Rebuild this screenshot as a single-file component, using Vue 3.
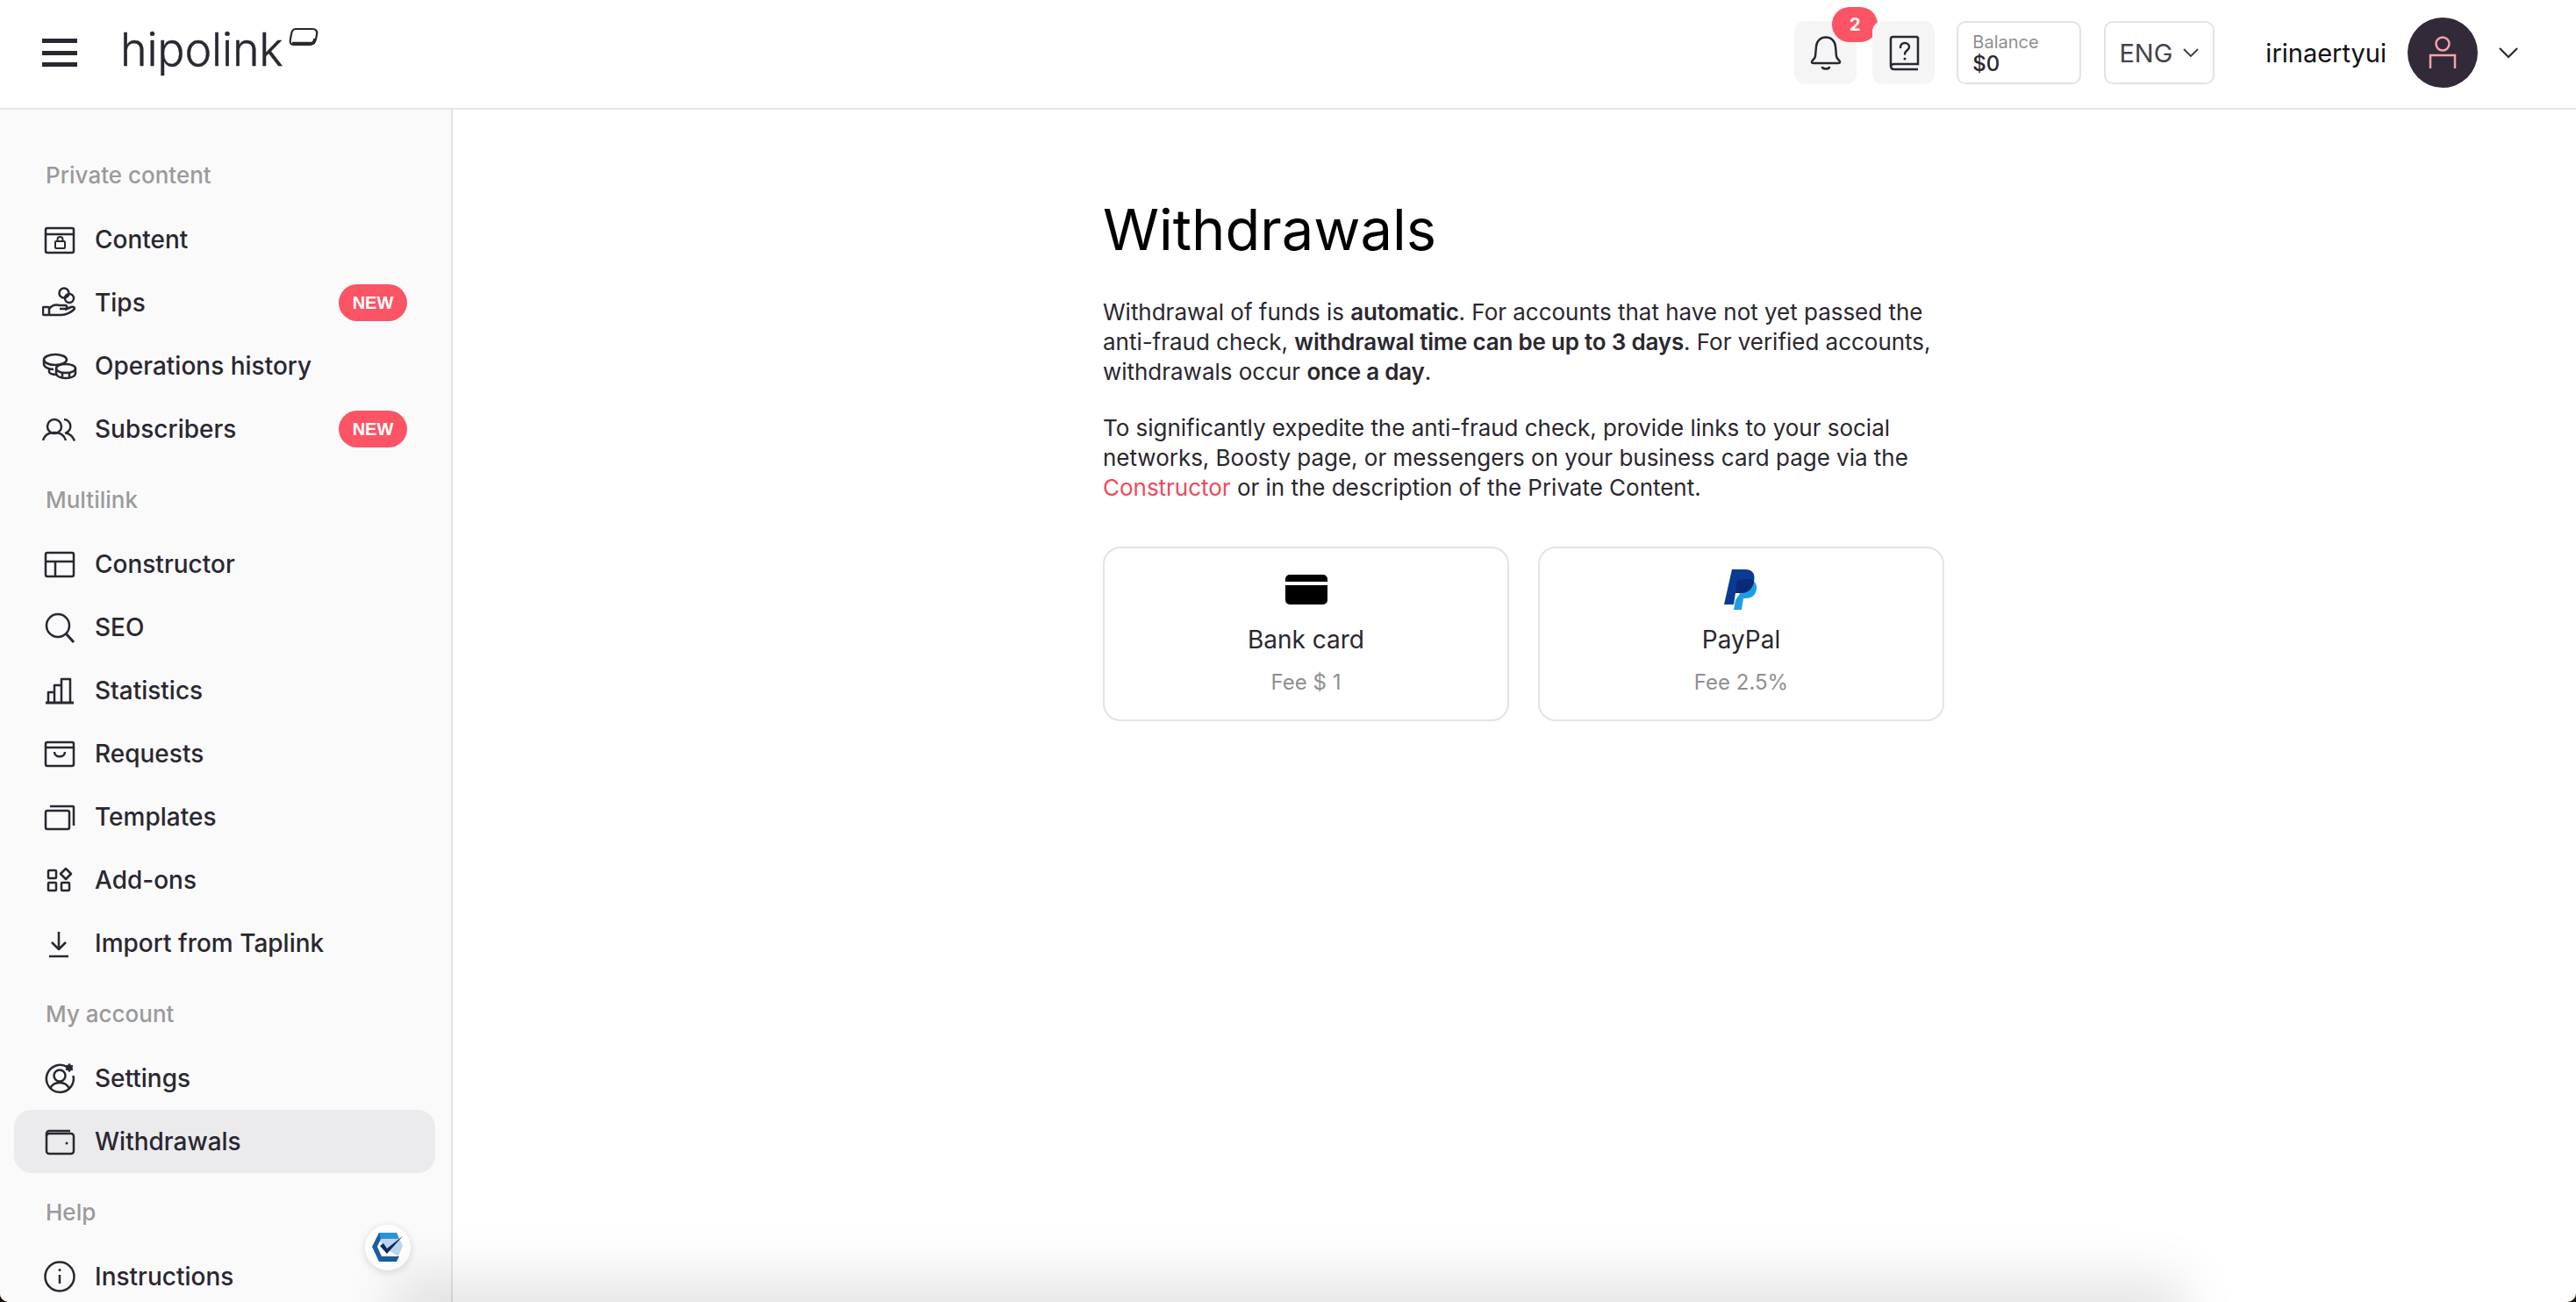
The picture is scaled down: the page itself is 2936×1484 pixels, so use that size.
<script setup>
const sections = [
  {
    title: 'Private content',
    items: [
      { name: 'Content', icon: '<rect x="4" y="7" width="32" height="28" rx="2"/><path d="M4 14H36"/><rect x="15" y="22" width="11" height="8" rx="1" stroke-width="2"/><path d="M17.500 22v-2a3 3 0 0 1 6 0v2" stroke-width="2"/>' },
      { name: 'Tips', badge: 'NEW', icon: '<circle cx="25" cy="9" r="5.500"/><circle cx="31" cy="15" r="5"/><rect x="1" y="25" width="7" height="9" rx="1"/><path d="M8 27c3-4 8-5 12-4h6c3 0 3 4 0 4h-6"/><path d="M8 34h14c5 0 11-3 14-6 2-2 0-4-3-3l-7 3"/>' },
      { name: 'Operations history', icon: '<ellipse cx="15" cy="13" rx="13" ry="6"/><path d="M2 13v5c0 3 5 6 11 6"/><ellipse cx="27" cy="23" rx="11" ry="5"/><path d="M16 23v5c0 4 5 6 11 6s11-2 11-6v-5M23 28v6M31 28v6M8 24v3c0 1 3 3 8 3"/>' },
      { name: 'Subscribers', badge: 'NEW', icon: '<circle cx="14" cy="17" r="8"/><path d="M1 33c2-7 7-9 13-9s11 2 13 9"/><path d="M25 9a8 8 0 0 1 2 15.500c4 1 8 4 10 9"/>' }
    ]
  },
  {
    title: 'Multilink',
    items: [
      { name: 'Constructor', icon: '<rect x="4" y="7" width="32" height="27" rx="2"/><path d="M4 17H36M15 17V34"/>' },
      { name: 'SEO', icon: '<circle cx="18" cy="18" r="13"/><path d="M27.500 27.500 36 37" stroke-width="3"/>' },
      { name: 'Statistics', icon: '<path d="M4 34H36" stroke-width="3"/><path d="M7 34V22H14V34M14 34V14H22V34M22 34V7H32V34"/>' },
      { name: 'Requests', icon: '<rect x="4" y="7" width="32" height="27" rx="2"/><path d="M4 13H36M14 18c0 7 12 7 12 0"/>' },
      { name: 'Templates', icon: '<rect x="4" y="13" width="27" height="21" rx="2"/><path d="M9 8H35a1 1 0 0 1 1 1V30"/>' },
      { name: 'Add-ons', icon: '<rect x="7" y="9" width="9" height="9" rx="1"/><rect x="7" y="23" width="9" height="9" rx="1"/><rect x="22" y="23" width="9" height="9" rx="1"/><path d="M27 7l6 6-6 6-6-6z"/>' },
      { name: 'Import from Taplink', icon: '<path d="M19 7V27M11 19l8 8 8-8"/><path d="M8 35H30"/>' }
    ]
  },
  {
    title: 'My account',
    items: [
      { name: 'Settings', icon: '<path d="M29 7.500A15.500 15.500 0 1 0 35.500 17"/><circle cx="20" cy="17" r="6.500"/><path d="M9 32c2-5 6-7 11-7s9 2 11 7"/><circle cx="31" cy="8" r="2.500" fill="#2a2730"/><path d="M31 3v10M27 5.500l8 5M35 5.500l-8 5" stroke-width="1.500"/>' },
      { name: 'Withdrawals', active: true, icon: '<rect x="5" y="11" width="31" height="23" rx="3"/><path d="M5 14V11a3 3 0 0 1 3-3H32"/><circle cx="28" cy="22" r="1.500" fill="#2a2730" stroke="none"/>' }
    ]
  },
  {
    title: 'Help',
    items: [
      { name: 'Instructions', icon: '<circle cx="20" cy="20" r="16.500"/><path d="M20 18V28"/><circle cx="20" cy="12.500" r="1.500" fill="#2a2730" stroke="none"/>' }
    ]
  }
]
</script>

<template>
  <div class="page">
    <header class="topbar">
      <div class="menuIcon"><span></span><span></span><span></span></div>
      <div class="logo">
        <span class="logoText">hipolink</span>
        <svg class="logoPill" width="34" height="24" viewBox="0 0 34 24" fill="none">
          <path d="M8 2H27C31 2 33 4.500 32 8.500L31 13.500C30 17.500 28 20 24 20H6C2 20 1 17.500 2 13.500L3 8C3.500 4.500 5 2 8 2Z" stroke="#2a2730" stroke-width="2.200"/>
          <path d="M4 18.500H26C28 18.500 29.500 16 30 13" stroke="#2a2730" stroke-width="3.600"/>
        </svg>
      </div>

      <div class="topRight">
        <div class="iconButton">
          <svg width="44" height="50" viewBox="0 0 44 50" fill="none" stroke="#2a2730" stroke-width="2.500" stroke-linecap="round" stroke-linejoin="round">
            <path d="M6 35.500c0-1.500 3.500-3 4-6.500l1-11c.5-6.500 5-10.500 11-10.500s10.500 4 11 10.500l1 11c.5 3.500 4 5 4 6.500 0 1-1 1.500-2 1.500H8c-1 0-2-.5-2-1.500Z"/>
            <path d="M18 42c2 2 6 2 8 0"/>
          </svg>
          <span class="countBadge">2</span>
        </div>
        <div class="iconButton">
          <svg width="44" height="50" viewBox="0 0 44 50" fill="none" stroke="#2a2730" stroke-width="2.500">
            <path d="M38 7H9.500C8 7 7 8 7 9.500V40c0 2.500 1.500 4 4 4H38M38 7V38H11C8.500 38 7 39.500 7 41"/>
            <path d="M18 19c0-3 2-5 5-5s5 2 5 4.500c0 4-5 4-5 8" stroke-linecap="round"/>
            <circle cx="23" cy="32" r="1.500" fill="#2a2730" stroke="none"/>
          </svg>
        </div>
        <div class="balance">
          <span class="balanceLabel">Balance</span>
          <span class="balanceValue">$0</span>
        </div>
        <div class="lang">
          <span>ENG</span>
          <svg width="20" height="12" viewBox="0 0 20 12" fill="none" stroke="#3c3c40" stroke-width="1.800"><path d="M2 2l8 8 8-8"/></svg>
        </div>
        <span class="userName">irinaertyui</span>
        <div class="avatar">
          <svg width="40" height="40" viewBox="0 0 40 40" fill="none" stroke="#f2a4ae" stroke-width="2.500">
            <circle cx="20" cy="10" r="7.500"/>
            <path d="M6 38V23H34V38"/>
          </svg>
        </div>
        <svg class="userChevron" width="24" height="14" viewBox="0 0 24 14" fill="none" stroke="#2a2730" stroke-width="2.200"><path d="M2 2l10 10L22 2"/></svg>
      </div>
    </header>

    <div class="body">
      <aside class="sidebar">
        <section v-for="section in sections" :key="section.title" class="navSection">
          <div class="sectionTitle">{{ section.title }}</div>
          <div v-for="item in section.items" :key="item.name" class="navItem" :class="{ active: item.active }">
            <svg class="navIcon" width="40" height="40" viewBox="0 0 40 40" fill="none" stroke="#2a2730" stroke-width="2.500" stroke-linejoin="round" v-html="item.icon"></svg>
            <span class="navName">{{ item.name }}</span>
            <span v-if="item.badge" class="newBadge">{{ item.badge }}</span>
          </div>
        </section>
      </aside>

      <main class="main">
        <h1 class="title">Withdrawals</h1>
        <p class="text">
          Withdrawal of funds is <b>automatic</b>. For accounts that have not yet passed the anti-fraud check, <b>withdrawal time can be up to 3 days</b>. For verified accounts, withdrawals occur <b>once a day</b>.
        </p>
        <p class="text">
          To significantly expedite the anti-fraud check, provide links to your social networks, Boosty page, or messengers on your business card page via the <a class="link">Constructor</a> or in the description of the Private Content.
        </p>
        <div class="methods">
          <div class="method">
            <div class="methodIcon">
              <svg width="48" height="34" viewBox="0 0 48 34">
                <path d="M5 0H43A5 5 0 0 1 48 5V8H0V5A5 5 0 0 1 5 0Z" fill="#000"/>
                <path d="M0 12H48V29A5 5 0 0 1 43 34H5A5 5 0 0 1 0 29Z" fill="#000"/>
              </svg>
            </div>
            <div class="methodName">Bank card</div>
            <div class="methodFee">Fee $ 1</div>
          </div>
          <div class="method">
            <div class="methodIcon">
              <svg width="40" height="46" viewBox="0 0 40 46">
                <path d="M29 11c6 2 9 6 8 12-1.500 7-6 10-13 10h-2l-2 13h-9l2-11Z" fill="#1f9fe3"/>
                <path d="M9 0H24C33 0 36 6 34 14 32 24 26 27 18 27H13L11 40H0Z" fill="#0b3a94"/>
                <path d="M13 27 15 12 30 11C32 12 34 13 34 14 32 24 26 27 18 27Z" fill="#0a2a78"/>
              </svg>
            </div>
            <div class="methodName">PayPal</div>
            <div class="methodFee">Fee 2.5%</div>
          </div>
        </div>
      </main>
    </div>

    <div class="checkBadge">
      <svg width="40" height="40" viewBox="0 0 40 40">
        <path d="M10 3H30L37 18 32 30 24 25 8 11Z" fill="#bcd4ef"/>
        <path d="M10 3H30L33 10H8Z" fill="#2a93d5"/>
        <path d="M10 3 2 19 10 36H30L33 30H13L8 19 12 10Z" fill="#1d5f9e"/>
        <path d="M11 18 19 27 37 7 19 21 15 15Z" fill="#0d2d5c"/>
      </svg>
    </div>
    <div class="windowShadow"></div>
  </div>
</template>

<style>
html, body {
  margin: 0;
  background: #1c1410;
}
</style>

<style scoped>
.page {
  width: 2936px;
  height: 1484px;
  position: relative;
  overflow: hidden;
  border-radius: 0 0 10px 10px;
  background: #fff;
  font-family: Inter, "Noto Sans", sans-serif;
  color: #2a2730;
}

.topbar {
  height: 123px;
  box-sizing: content-box;
  border-bottom: 2px solid #e4e4e4;
  display: flex;
  align-items: center;
  padding: 0 65px 0 48px;
  background: #fff;
}

.menuIcon {
  width: 40px;
  height: 32px;
  margin-top: -3px;
  display: flex;
  flex-direction: column;
  justify-content: space-between;
}
.menuIcon span {
  height: 5px;
  background: #2a2730;
}

.logo {
  display: flex;
  align-items: flex-start;
  margin-left: 49px;
  margin-top: -9px;
}
.logoText {
  font-size: 52px;
  font-weight: 300;
  letter-spacing: -0.2px;
  line-height: 60px;
  -webkit-text-stroke: 0.4px #2a2730;
}
.logoPill {
  margin-top: 4px;
  margin-left: 6px;
}

.topRight {
  margin-left: auto;
  margin-top: -3px;
  display: flex;
  align-items: center;
}

.iconButton {
  width: 71px;
  height: 72px;
  border-radius: 12px;
  background: #f5f5f6;
  display: flex;
  align-items: center;
  justify-content: center;
  position: relative;
  margin-right: 18px;
}

.countBadge {
  position: absolute;
  top: -16px;
  left: 43px;
  width: 52px;
  height: 40px;
  border-radius: 20px;
  background: #fb5464;
  color: #fff;
  font-size: 20px;
  font-weight: 700;
  display: flex;
  align-items: center;
  justify-content: center;
}

.balance {
  width: 142px;
  height: 72px;
  box-sizing: border-box;
  border: 2px solid #e3e3e3;
  border-radius: 10px;
  padding: 11px 16px;
  margin-left: 7px;
  display: flex;
  flex-direction: column;
}
.balanceLabel {
  font-size: 20px;
  line-height: 23px;
  color: #8f8f93;
}
.balanceValue {
  font-size: 24px;
  line-height: 26px;
  font-weight: 500;
}

.lang {
  width: 126px;
  height: 72px;
  box-sizing: border-box;
  border: 2px solid #e3e3e3;
  border-radius: 10px;
  margin-left: 26px;
  display: flex;
  align-items: center;
  justify-content: center;
  gap: 11px;
  font-size: 29px;
  color: #444448;
}

.userName {
  margin-left: 58px;
  font-size: 29px;
  color: #111;
}

.avatar {
  width: 80px;
  height: 80px;
  margin-left: 24px;
  border-radius: 50%;
  background: #322a38;
  display: flex;
  align-items: center;
  justify-content: center;
}

.userChevron {
  margin-left: 23px;
}

.body {
  display: flex;
  height: 1359px;
}

.sidebar {
  width: 516px;
  flex-shrink: 0;
  box-sizing: border-box;
  background: #fafafb;
  border-right: 2px solid #e4e4e4;
  padding-top: 55px;
  overflow: hidden;
}

.navSection {
  margin-bottom: 25px;
}

.sectionTitle {
  height: 40px;
  line-height: 40px;
  padding-left: 52px;
  margin-bottom: 17px;
  font-size: 26px;
  font-weight: 500;
  color: #9a9a9c;
}

.navItem {
  height: 72px;
  margin: 0 18px 0 16px;
  padding: 0 32px;
  border-radius: 20px;
  display: flex;
  align-items: center;
  font-size: 28px;
  font-weight: 500;
}
.navItem.active {
  background: #ebebed;
}

.navIcon {
  flex-shrink: 0;
}

.navName {
  margin-left: 20px;
}

.newBadge {
  margin-left: auto;
  width: 78px;
  height: 42px;
  border-radius: 21px;
  background: #fb5464;
  color: #fff;
  font-family: "Liberation Sans", sans-serif;
  font-size: 20px;
  font-weight: 700;
  display: flex;
  align-items: center;
  justify-content: center;
}

.main {
  flex: 1;
  padding: 99px 0 0 741px;
}

.title {
  margin: 0 0 39px;
  font-size: 65px;
  font-weight: 400;
  line-height: 76px;
  color: #000;
}

.text {
  width: 960px;
  margin: 0 0 30px;
  font-size: 26px;
  letter-spacing: -0.02px;
  line-height: 34px;
}
.text b {
  font-weight: 600;
  letter-spacing: -0.2px;
}

.link {
  color: #f0495c;
}

.methods {
  display: flex;
  gap: 33px;
  margin-top: 50px;
}

.method {
  width: 463px;
  height: 199px;
  box-sizing: border-box;
  border: 2px solid #e3e3e3;
  border-radius: 20px;
  display: flex;
  flex-direction: column;
  align-items: center;
  padding-top: 24px;
}

.methodIcon {
  height: 46px;
  display: flex;
  align-items: center;
}

.methodName {
  margin-top: 16px;
  font-size: 28px;
  line-height: 36px;
}

.methodFee {
  margin-top: 16px;
  font-size: 24px;
  line-height: 30px;
  color: #8f8f93;
}

.checkBadge {
  position: absolute;
  left: 416px;
  top: 1396px;
  width: 52px;
  height: 52px;
  border-radius: 50%;
  background: #fff;
  box-shadow: 0 2px 10px rgba(0, 0, 0, 0.14);
  display: flex;
  align-items: center;
  justify-content: center;
}

.windowShadow {
  position: absolute;
  left: 480px;
  width: 1980px;
  bottom: -30px;
  height: 30px;
  box-shadow: 0 0 60px 30px rgba(0, 0, 0, 0.1);
  pointer-events: none;
}
</style>
